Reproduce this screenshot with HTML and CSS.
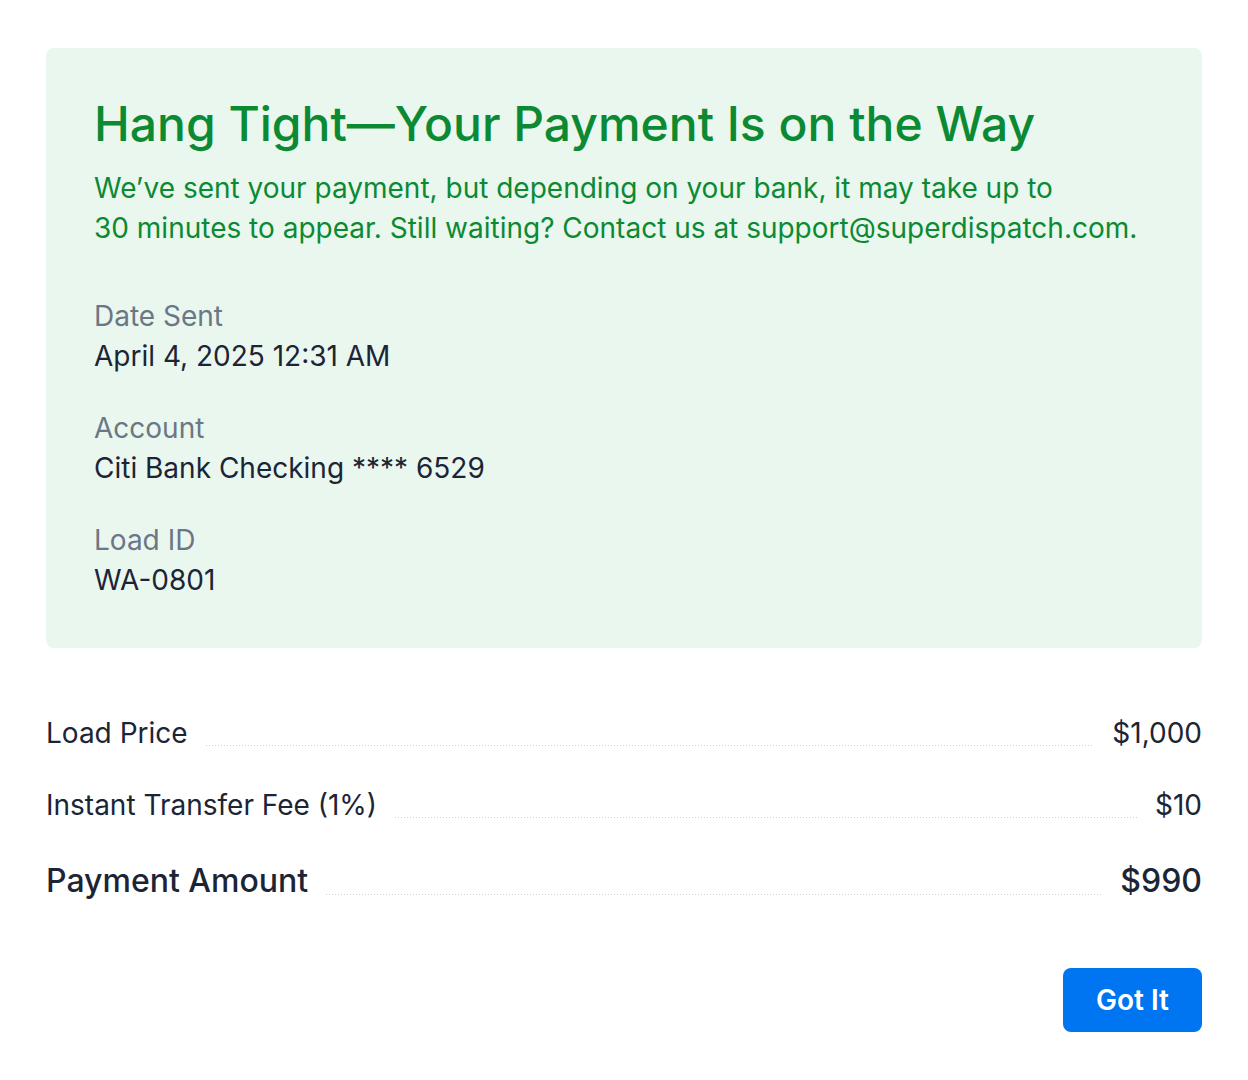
FILE: index.html
```html
<!DOCTYPE html>
<html lang="en">
<head>
    <meta charset="UTF-8">
    <meta name="viewport" content="width=device-width, initial-scale=1.0">
    <title>Payment Sent</title>
    <link rel="stylesheet" href="styles.css">
</head>
<body>
    <div class="dialog">
        <div class="notice">
            <h1>Hang Tight—Your Payment Is on the Way</h1>
            <p class="notice-text">We’ve sent your payment, but depending on your bank, it may take up to<br>30 minutes to appear. Still waiting? Contact us at support@superdispatch.com.</p>

            <div class="field">
                <div class="field-label">Date Sent</div>
                <div class="field-value">April 4, 2025 12:31 AM</div>
            </div>
            <div class="field">
                <div class="field-label">Account</div>
                <div class="field-value">Citi Bank Checking **** 6529</div>
            </div>
            <div class="field">
                <div class="field-label">Load ID</div>
                <div class="field-value">WA-0801</div>
            </div>
        </div>

        <div class="summary">
            <div class="line">
                <span>Load Price</span>
                <span class="dots"></span>
                <span>$1,000</span>
            </div>
            <div class="line">
                <span>Instant Transfer Fee (1%)</span>
                <span class="dots"></span>
                <span>$10</span>
            </div>
            <div class="line total">
                <span>Payment Amount</span>
                <span class="dots"></span>
                <span>$990</span>
            </div>
        </div>

        <div class="actions">
            <button class="btn-primary">Got It</button>
        </div>
    </div>
</body>
</html>
```

FILE: styles.css
```css
body {
    font-family: Inter, "Noto Sans", sans-serif;
    background-color: #fff;
    color: #1b2536;
    margin: 0;
    padding: 0;
}
.dialog {
    padding: 48px 46px;
}
.notice {
    background: #eaf7ee;
    border-radius: 8px;
    padding: 48px;
    color: #0b8a33;
}
h1 {
    margin: 0;
    font-size: 48px;
    line-height: 56px;
    font-weight: 500;
}
.notice-text {
    margin: 16px 0 48px;
    font-size: 28px;
    line-height: 40px;
}
.field {
    margin-top: 32px;
    font-size: 28px;
    line-height: 40px;
}
.notice-text + .field {
    margin-top: 0;
}
.field-label {
    color: #6b7686;
}
.field-value {
    color: #1b2536;
}
.summary {
    margin-top: 65px;
}
.line {
    display: flex;
    align-items: baseline;
    font-size: 28px;
    line-height: 40px;
    margin-bottom: 32px;
}
.line.total {
    font-size: 32px;
    line-height: 48px;
    font-weight: 500;
    margin-bottom: 0;
}
.dots {
    flex: 1;
    height: 1px;
    margin: 0 18px;
    background-image: linear-gradient(to right, #cdd2d9 1px, transparent 1px);
    background-size: 3px 1px;
    background-repeat: repeat-x;
    transform: translateY(3px);
}
.actions {
    display: flex;
    justify-content: flex-end;
    margin-top: 63px;
}
.btn-primary {
    height: 64px;
    padding: 0 33px;
    background: #0075f2;
    color: #fff;
    border: none;
    border-radius: 8px;
    font-family: inherit;
    font-size: 28px;
    font-weight: 600;
    cursor: pointer;
}
```
